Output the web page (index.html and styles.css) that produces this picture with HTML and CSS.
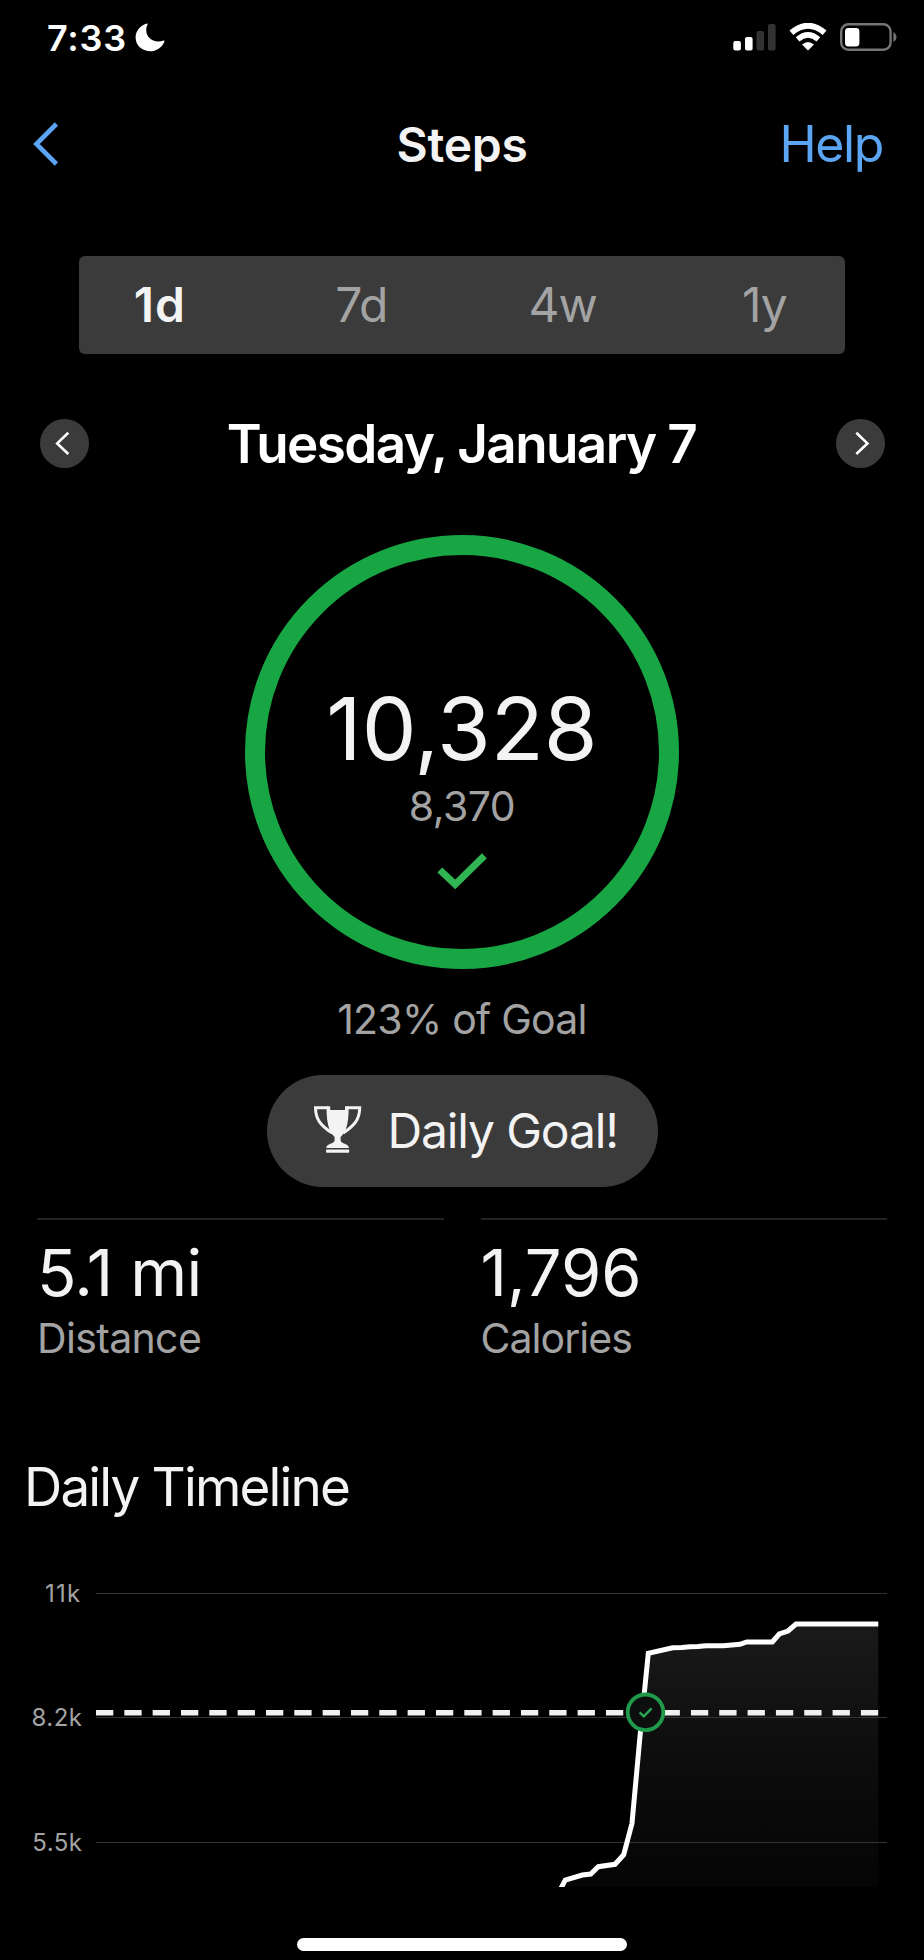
FILE: index.html
```html
<!DOCTYPE html>
<html lang="en">
<head>
    <meta charset="UTF-8">
    <meta name="viewport" content="width=device-width, initial-scale=1.0">
    <title>Steps</title>
    <link rel="stylesheet" href="styles.css">
</head>
<body>
    <header class="status-bar">
        <div class="status-left">
            <span class="time">7:33</span>
            <svg class="moon" width="30" height="29" viewBox="0 0 30 29">
                <path d="M12.2 0.6 C5.2 2.4 0.6 8 0.6 14.6 C0.6 22.4 7 28.2 14.6 28.2 C21.4 28.2 27 24.6 29.4 18.4 C29.6 17.8 29.2 17.4 28.6 17.6 C27 18.2 25 18.4 23.2 18.4 C16.2 18.4 11.2 13.6 11.2 6.8 C11.2 5 11.8 3 12.6 1.5 C12.9 0.9 12.7 0.5 12.2 0.6 Z" fill="#fff"/>
            </svg>
        </div>
        <div class="status-right">
            <svg width="43" height="28" viewBox="0 0 43 28">
                <rect x="0.3" y="18" width="7.6" height="9.5" rx="2" fill="#fff"/>
                <rect x="12" y="14" width="7.6" height="13.5" rx="2" fill="#fff"/>
                <rect x="23.5" y="8" width="7.6" height="19.5" rx="2" fill="#333"/>
                <rect x="35" y="1" width="7.6" height="26.5" rx="2" fill="#333"/>
            </svg>
            <svg width="38" height="28" viewBox="0 0 38 28">
                <path d="M2.4 9.8 Q19 -4.4 35.6 9.8" fill="none" stroke="#fff" stroke-width="5.8"/>
                <path d="M8.6 16.4 Q19 7.4 29.4 16.4" fill="none" stroke="#fff" stroke-width="5.6"/>
                <path d="M13 21.6 Q19 16.6 25 21.6 L19.8 26.8 Q19 27.8 18.2 26.8 Z" fill="#fff"/>
            </svg>
            <svg width="57" height="28" viewBox="0 0 57 28">
                <rect x="1.2" y="1.3" width="49.4" height="25.4" rx="7.2" fill="none" stroke="#757575" stroke-width="2.4"/>
                <rect x="5" y="5" width="14.4" height="18.4" rx="3.4" fill="#fff"/>
                <path d="M53.4 9 Q56.6 11 56.6 14 Q56.6 17 53.4 19 Z" fill="#757575"/>
            </svg>
        </div>
    </header>

    <nav class="navbar">
        <a href="#" class="back-link">
            <svg width="26" height="44" viewBox="0 0 26 44">
                <path d="M23.4 2 L3.4 22 L23.4 42" fill="none" stroke="#5ca5f2" stroke-width="4.6"/>
            </svg>
        </a>
        <h1>Steps</h1>
        <a href="#" class="help-link">Help</a>
    </nav>

    <div class="tabs">
        <div class="tab active">1d</div>
        <div class="tab">7d</div>
        <div class="tab">4w</div>
        <div class="tab">1y</div>
    </div>

    <div class="date-row">
        <button class="round-btn">
            <svg width="49" height="49" viewBox="0 0 49 49">
                <path d="M28.3 13.8 L17.2 24.4 L28.3 35" fill="none" stroke="#fff" stroke-width="2.6"/>
            </svg>
        </button>
        <h2>Tuesday, January 7</h2>
        <button class="round-btn">
            <svg width="49" height="49" viewBox="0 0 49 49">
                <path d="M20.3 13.8 L31.4 24.4 L20.3 35" fill="none" stroke="#fff" stroke-width="2.6"/>
            </svg>
        </button>
    </div>

    <div class="ring">
        <div class="steps">10,328</div>
        <div class="goal">8,370</div>
        <svg class="check" width="50" height="38" viewBox="0 0 50 38">
            <path d="M2.8 17 L18.2 31.4 L47.4 2.8" fill="none" stroke="#2fb552" stroke-width="7"/>
        </svg>
    </div>
    <div class="percent">123% of Goal</div>

    <div class="badge">
        <svg width="48" height="48" viewBox="0 0 48 48">
            <path d="M14 1.7 H1.5 C1.7 13 6 19 18 27 M33 1.7 H45.7 C45.5 13 41.2 19 29.2 27" fill="none" stroke="#f3f3f3" stroke-width="3"/>
            <path d="M12.6 0.2 H16.2 V4 H31 V0.2 H34.6 C34.8 10 34 18 31.4 24.4 Q29 29 26.6 31 V34.6 C27 38 34.6 37.6 35 42 H12.2 C12.6 37.6 20.2 38 20.6 34.6 V31 Q18.2 29 15.8 24.4 C13.2 18 12.4 10 12.6 0.2 Z" fill="#f3f3f3"/>
            <rect x="12" y="43.6" width="23.2" height="3.2" rx="0.8" fill="#f3f3f3"/>
        </svg>
        <span>Daily Goal!</span>
    </div>

    <div class="stats">
        <div class="stat">
            <div class="stat-value distance">5.1 mi</div>
            <div class="stat-label">Distance</div>
        </div>
        <div class="stat">
            <div class="stat-value">1,796</div>
            <div class="stat-label calories">Calories</div>
        </div>
    </div>

    <h3>Daily Timeline</h3>

    <svg class="chart" width="924" height="328" viewBox="0 1560 924 328">
        <defs>
            <linearGradient id="area" x1="0" y1="0" x2="0" y2="1">
                <stop offset="0" stop-color="#1a1a1a"/>
                <stop offset="0.5" stop-color="#0d0d0d"/>
                <stop offset="1" stop-color="#050505"/>
            </linearGradient>
            <clipPath id="plot">
                <rect x="96" y="1560" width="782.3" height="327"/>
            </clipPath>
        </defs>
        <path d="M561.7 1887 L565.3 1880 L582.3 1875 L590.7 1874 L598.3 1866.7 L615 1864.3 L623.7 1854.7 L632 1823.3 L640.3 1733 L648.3 1653.3 L672.7 1647.7 L698 1646.5 L706 1645.7 L723.3 1645.7 L740 1644.3 L746.7 1642 L772.3 1642 L779.3 1634 L788 1631 L796 1624 H878.3 V1887 Z" fill="url(#area)"/>
        <g class="grid">
            <path d="M96 1593.5 H887"/>
            <path d="M96 1717.5 H887"/>
            <path d="M96 1842.5 H887"/>
        </g>
        <g class="axis">
            <text class="top-tick" x="81.5" y="1602">11k</text>
            <text x="82.5" y="1726">8.2k</text>
            <text x="82.5" y="1851">5.5k</text>
        </g>
        <path class="goal-line" d="M96 1712.7 H878.3"/>
        <path class="series" clip-path="url(#plot)" d="M559 1892 L565.3 1880 L582.3 1875 L590.7 1874 L598.3 1866.7 L615 1864.3 L623.7 1854.7 L632 1823.3 L640.3 1733 L648.3 1653.3 L672.7 1647.7 L681.7 1647.5 L690 1646.7 L698 1646.5 L706 1645.7 L723.3 1645.7 L740 1644.3 L746.7 1642 L772.3 1642 L779.3 1634 L788 1631 L796 1624 H880"/>
        <circle cx="645.5" cy="1712.3" r="17.8" fill="#0d0f0e" stroke="#209a4a" stroke-width="3.8"/>
        <path d="M639.6 1712.4 L643.8 1716.4 L651.6 1708.4" fill="none" stroke="#2aa852" stroke-width="2.4"/>
    </svg>

    <div class="home-bar"></div>
</body>
</html>
```
FILE: styles.css
```css
body, html {
    margin: 0;
    padding: 0;
    background-color: #000;
    color: #f3f3f3;
    font-family: Inter, "Liberation Sans", sans-serif;
}
body {
    width: 924px;
    height: 1960px;
    overflow: hidden;
}
* {
    box-sizing: border-box;
}
h1, h2, h3 {
    margin: 0;
    white-space: nowrap;
}
svg {
    display: block;
    flex-shrink: 0;
}
a {
    text-decoration: none;
}
.status-bar {
    display: flex;
    justify-content: space-between;
    align-items: center;
    height: 75px;
    padding: 0 27px 0 47px;
}
.status-left {
    display: flex;
    align-items: center;
}
.time {
    width: 88px;
    font-size: 36px;
    font-weight: 600;
    letter-spacing: 0.8px;
    color: #fff;
}
.moon {
    margin-top: -1px;
}
.status-right {
    display: flex;
    gap: 13px;
    margin-top: -1px;
}
.navbar {
    display: grid;
    grid-template-columns: 1fr auto 1fr;
    align-items: center;
    height: 139px;
    padding: 0 41px;
}
.navbar h1 {
    font-size: 48px;
    font-weight: 600;
    letter-spacing: -0.3px;
}
.back-link {
    margin: -2px 0 0 -8px;
}
.help-link {
    justify-self: end;
    margin-top: -1px;
    font-size: 50px;
    letter-spacing: -1.4px;
    color: #5ca5f2;
}
.tabs {
    display: grid;
    grid-template-columns: repeat(4, 201.5px);
    justify-content: center;
    height: 98px;
    margin: 42px 79px 0;
    border-radius: 6px;
    background-color: #3b3b3b;
}
.tab {
    text-align: center;
    font-size: 48px;
    line-height: 98px;
    letter-spacing: -1px;
    color: #a3a3a3;
}
.tab.active {
    font-weight: 600;
    letter-spacing: 0.8px;
    color: #f3f3f3;
}
.date-row {
    display: flex;
    justify-content: space-between;
    align-items: center;
    height: 50px;
    margin: 64px 39px 0 40px;
}
.date-row h2 {
    margin: 1px 2px 0 0;
    font-size: 53px;
    font-weight: 600;
    letter-spacing: -1.6px;
    color: #fff;
}
.round-btn {
    width: 49px;
    height: 49px;
    padding: 0;
    border: none;
    border-radius: 50%;
    background-color: #3b3b3b;
}
.ring {
    display: flex;
    flex-direction: column;
    align-items: center;
    width: 434px;
    height: 434px;
    margin: 67px auto 0;
    padding-top: 124px;
    border: 20px solid #18a544;
    border-radius: 50%;
}
.steps {
    font-size: 87px;
    line-height: 100px;
}
.goal {
    margin-top: -1px;
    font-size: 41px;
    line-height: 56px;
    letter-spacing: -0.5px;
    color: #a3a3a3;
}
.check {
    margin-top: 19px;
}
.percent {
    margin-top: 20px;
    text-align: center;
    font-size: 41px;
    line-height: 60px;
    letter-spacing: -0.75px;
    color: #a3a3a3;
}
.badge {
    display: flex;
    align-items: center;
    gap: 26px;
    width: 391px;
    height: 112px;
    margin: 26px auto 0;
    padding: 0 0 2px 47px;
    border-radius: 56px;
    background-color: #3b3b3b;
    font-size: 48px;
    letter-spacing: -1.15px;
    white-space: nowrap;
}
.stats {
    display: grid;
    grid-template-columns: 1fr 1fr;
    gap: 37px;
    height: 220px;
    margin: 31px 37px 0;
}
.stat {
    border-top: 2px solid #222;
}
.stat-value {
    margin-top: 13px;
    font-size: 65px;
    line-height: 80px;
}
.distance {
    letter-spacing: -0.6px;
}
.stat-label {
    margin-top: -1px;
    font-size: 41px;
    line-height: 52px;
    letter-spacing: -0.65px;
    color: #a3a3a3;
}
.calories {
    letter-spacing: -0.95px;
}
h3 {
    margin-left: 24px;
    font-size: 53px;
    font-weight: 400;
    line-height: 98px;
    letter-spacing: -1.85px;
}
.chart {
    margin-top: 24px;
}
.grid path {
    stroke: #333;
    stroke-width: 1;
}
.axis text {
    font-size: 24px;
    letter-spacing: 0.5px;
    fill: #a3a3a3;
    text-anchor: end;
}
.axis .top-tick {
    letter-spacing: 1.3px;
}
.goal-line {
    stroke: #f0f0f0;
    stroke-width: 5.4;
    stroke-dasharray: 17.3 11.03;
}
.series {
    fill: none;
    stroke: #fff;
    stroke-width: 5;
}
.home-bar {
    width: 330px;
    height: 13px;
    margin: 50px auto 0;
    border-radius: 7px;
    background-color: #fff;
}
```
